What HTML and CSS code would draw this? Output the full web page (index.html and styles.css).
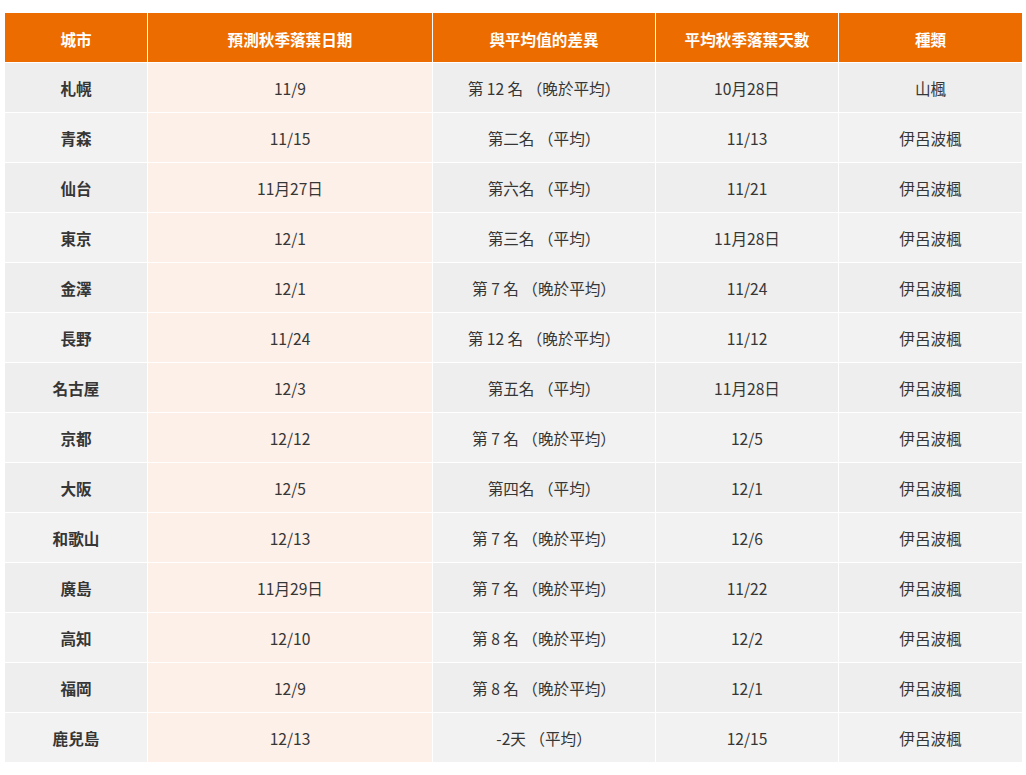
FILE: index.html
```html
<!DOCTYPE html>
<html lang="zh-Hant">
<head>
<meta charset="utf-8">
<link rel="stylesheet" href="styles.css">
</head>
<body>
<div class="wrap">
<table class="tbl">
<colgroup>
<col class="c1"><col class="c2"><col class="c3"><col class="c4"><col class="c5">
</colgroup>
<thead>
<tr><th>城市</th><th>預測秋季落葉日期</th><th>與平均值的差異</th><th>平均秋季落葉天數</th><th>種類</th></tr>
</thead>
<tbody>
<tr><td class="city">札幌</td><td class="pred">11/9</td><td>第 12 名 （晚於平均）</td><td>10月28日</td><td>山楓</td></tr>
<tr><td class="city">青森</td><td class="pred">11/15</td><td>第二名 （平均）</td><td>11/13</td><td>伊呂波楓</td></tr>
<tr><td class="city">仙台</td><td class="pred">11月27日</td><td>第六名 （平均）</td><td>11/21</td><td>伊呂波楓</td></tr>
<tr><td class="city">東京</td><td class="pred">12/1</td><td>第三名 （平均）</td><td>11月28日</td><td>伊呂波楓</td></tr>
<tr><td class="city">金澤</td><td class="pred">12/1</td><td>第 7 名 （晚於平均）</td><td>11/24</td><td>伊呂波楓</td></tr>
<tr><td class="city">長野</td><td class="pred">11/24</td><td>第 12 名 （晚於平均）</td><td>11/12</td><td>伊呂波楓</td></tr>
<tr><td class="city">名古屋</td><td class="pred">12/3</td><td>第五名 （平均）</td><td>11月28日</td><td>伊呂波楓</td></tr>
<tr><td class="city">京都</td><td class="pred">12/12</td><td>第 7 名 （晚於平均）</td><td>12/5</td><td>伊呂波楓</td></tr>
<tr><td class="city">大阪</td><td class="pred">12/5</td><td>第四名 （平均）</td><td>12/1</td><td>伊呂波楓</td></tr>
<tr><td class="city">和歌山</td><td class="pred">12/13</td><td>第 7 名 （晚於平均）</td><td>12/6</td><td>伊呂波楓</td></tr>
<tr><td class="city">廣島</td><td class="pred">11月29日</td><td>第 7 名 （晚於平均）</td><td>11/22</td><td>伊呂波楓</td></tr>
<tr><td class="city">高知</td><td class="pred">12/10</td><td>第 8 名 （晚於平均）</td><td>12/2</td><td>伊呂波楓</td></tr>
<tr><td class="city">福岡</td><td class="pred">12/9</td><td>第 8 名 （晚於平均）</td><td>12/1</td><td>伊呂波楓</td></tr>
<tr><td class="city">鹿兒島</td><td class="pred">12/13</td><td>-2天 （平均）</td><td>12/15</td><td>伊呂波楓</td></tr>
</tbody>
</table>
</div>
</body>
</html>
```
FILE: styles.css
```css
html, body {
  margin: 0;
  padding: 0;
  background: #ffffff;
}
.wrap {
  padding: 13px 4px 0 5px;
}
.tbl {
  width: 1017px;
  border-collapse: separate;
  border-spacing: 0;
  table-layout: fixed;
  font-family: "Noto Sans CJK TC", "Noto Sans", sans-serif;
  font-size: 15.6px;
  color: #363636;
}
.c1 { width: 142px; }
.c2 { width: 285px; }
.c3 { width: 223px; }
.c4 { width: 183px; }
.c5 { width: 184px; }
.tbl th {
  background: #ec6c00;
  color: #ffffff;
  font-weight: 700;
  height: 49px;
  padding: 2px 0 0;
  text-align: center;
  vertical-align: middle;
  border-left: 1px solid #ffffff;
  box-sizing: border-box;
}
.tbl th:first-child,
.tbl td:first-child {
  border-left: none;
}
.tbl td {
  height: 50px;
  padding: 0;
  box-sizing: border-box;
  text-align: center;
  vertical-align: middle;
  border-left: 1px solid #ffffff;
  border-top: 1px solid #ffffff;
  background: #eeeeee;
}
.tbl tbody tr:nth-child(even) td {
  background: #f2f2f2;
}
.tbl tbody tr td.pred {
  background: #fdf0e9;
}
.tbl td.city {
  font-weight: 700;
}
```
